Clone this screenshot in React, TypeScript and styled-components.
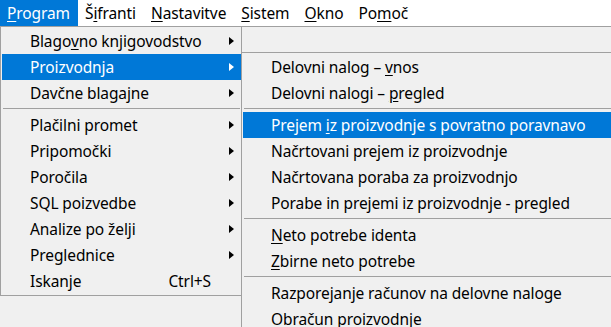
import React from 'react';
import styled, { createGlobalStyle, css } from 'styled-components';

const Global = createGlobalStyle`
  html, body {
    margin: 0;
    padding: 0;
    background: #f0f0f0;
    overflow: hidden;
  }
  body {
    font-family: "Noto Sans", "Open Sans", sans-serif;
    font-size: 15.5px;
    letter-spacing: -0.1px;
    color: #000;
  }
  #root {
    width: 611px;
    height: 327px;
  }
`;

const Screen = styled.div`
  position: relative;
  width: 611px;
  height: 327px;
  overflow: hidden;
  background: #f0f0f0;
`;

const MenuBar = styled.nav`
  display: flex;
  height: 26px;
  background: #fff;
  border-bottom: 1px solid #a0a0a0;
`;

const BarItem = styled.div<{ $active?: boolean }>`
  padding: 0 8px 0 7px;
  line-height: 26px;
  white-space: nowrap;
  ${(p) =>
    p.$active &&
    css`
      background: #0078d7;
      color: #fff;
    `}
`;

const Mn = styled.span`
  text-decoration: underline;
  text-decoration-thickness: 1px;
  text-underline-offset: 2px;
`;

const Menu = styled.div<{ $left: number; $top: number; $width: number }>`
  position: absolute;
  left: ${(p) => p.$left}px;
  top: ${(p) => p.$top}px;
  width: ${(p) => p.$width}px;
  box-sizing: border-box;
  background: #f0f0f0;
  border: 1px solid #a0a0a0;
  padding: 1px 0 1px 1px;
`;

const Item = styled.div<{ $hl?: boolean }>`
  display: flex;
  align-items: center;
  height: 26px;
  padding-left: 28px;
  white-space: nowrap;
  ${(p) =>
    p.$hl &&
    css`
      background: #0078d7;
      color: #fff;
    `}
`;

const Label = styled.span`
  flex: 1;
`;

const Shortcut = styled.span`
  margin-right: 30px;
`;

const Arrow = styled.span`
  width: 0;
  height: 0;
  border-top: 4px solid transparent;
  border-bottom: 4px solid transparent;
  border-left: 5px solid currentColor;
  margin-right: 7px;
`;

const Sep = styled.div`
  height: 1px;
  background: #a0a0a0;
  margin: 2px 1px 3px 1px;
`;

type Entry =
  | { sep: true }
  | { sep?: false; label: React.ReactNode; hl?: boolean; sub?: boolean; shortcut?: string };

const mainMenu: Entry[] = [
  { label: <>Blago<Mn>v</Mn>no knjigovodstvo</>, sub: true },
  { label: 'Proizvodnja', sub: true, hl: true },
  { label: 'Davčne blagajne', sub: true },
  { sep: true },
  { label: 'Plačilni promet', sub: true },
  { label: 'Pripomočki', sub: true },
  { label: 'Poročila', sub: true },
  { label: 'SQL poizvedbe', sub: true },
  { label: 'Analize po želji', sub: true },
  { label: 'Preglednice', sub: true },
  { label: 'Iskanje', shortcut: 'Ctrl+S' },
];

const subMenu: Entry[] = [
  { label: <>Delovni nalog – <Mn>v</Mn>nos</> },
  { label: <>Delovni nalogi – <Mn>p</Mn>regled</> },
  { sep: true },
  { label: <>Prejem <Mn>i</Mn>z proizvodnje s povratno poravnavo</>, hl: true },
  { label: 'Načrtovani prejem iz proizvodnje' },
  { label: 'Načrtovana poraba za proizvodnjo' },
  { label: 'Porabe in prejemi iz proizvodnje - pregled' },
  { sep: true },
  { label: <><Mn>N</Mn>eto potrebe identa</> },
  { label: <><Mn>Z</Mn>birne neto potrebe</> },
  { sep: true },
  { label: 'Razporejanje računov na delovne naloge' },
  { label: 'Obračun proizvodnje' },
];

const renderEntries = (entries: Entry[]) =>
  entries.map((e, i) =>
    e.sep ? (
      <Sep key={i} />
    ) : (
      <Item key={i} $hl={e.hl}>
        <Label>{e.label}</Label>
        {e.shortcut && <Shortcut>{e.shortcut}</Shortcut>}
        {e.sub && <Arrow />}
      </Item>
    )
  );

export default function App() {
  return (
    <Screen>
      <Global />
      <MenuBar>
        <BarItem $active>
          <Mn>P</Mn>rogram
        </BarItem>
        <BarItem>
          Š<Mn>i</Mn>franti
        </BarItem>
        <BarItem>
          <Mn>N</Mn>astavitve
        </BarItem>
        <BarItem>
          <Mn>S</Mn>istem
        </BarItem>
        <BarItem>
          <Mn>O</Mn>kno
        </BarItem>
        <BarItem>
          Po<Mn>m</Mn>oč
        </BarItem>
      </MenuBar>
      <Menu $left={0} $top={26} $width={242}>
        {renderEntries(mainMenu)}
      </Menu>
      <Menu $left={241} $top={52} $width={420}>
        {renderEntries(subMenu)}
      </Menu>
    </Screen>
  );
}
